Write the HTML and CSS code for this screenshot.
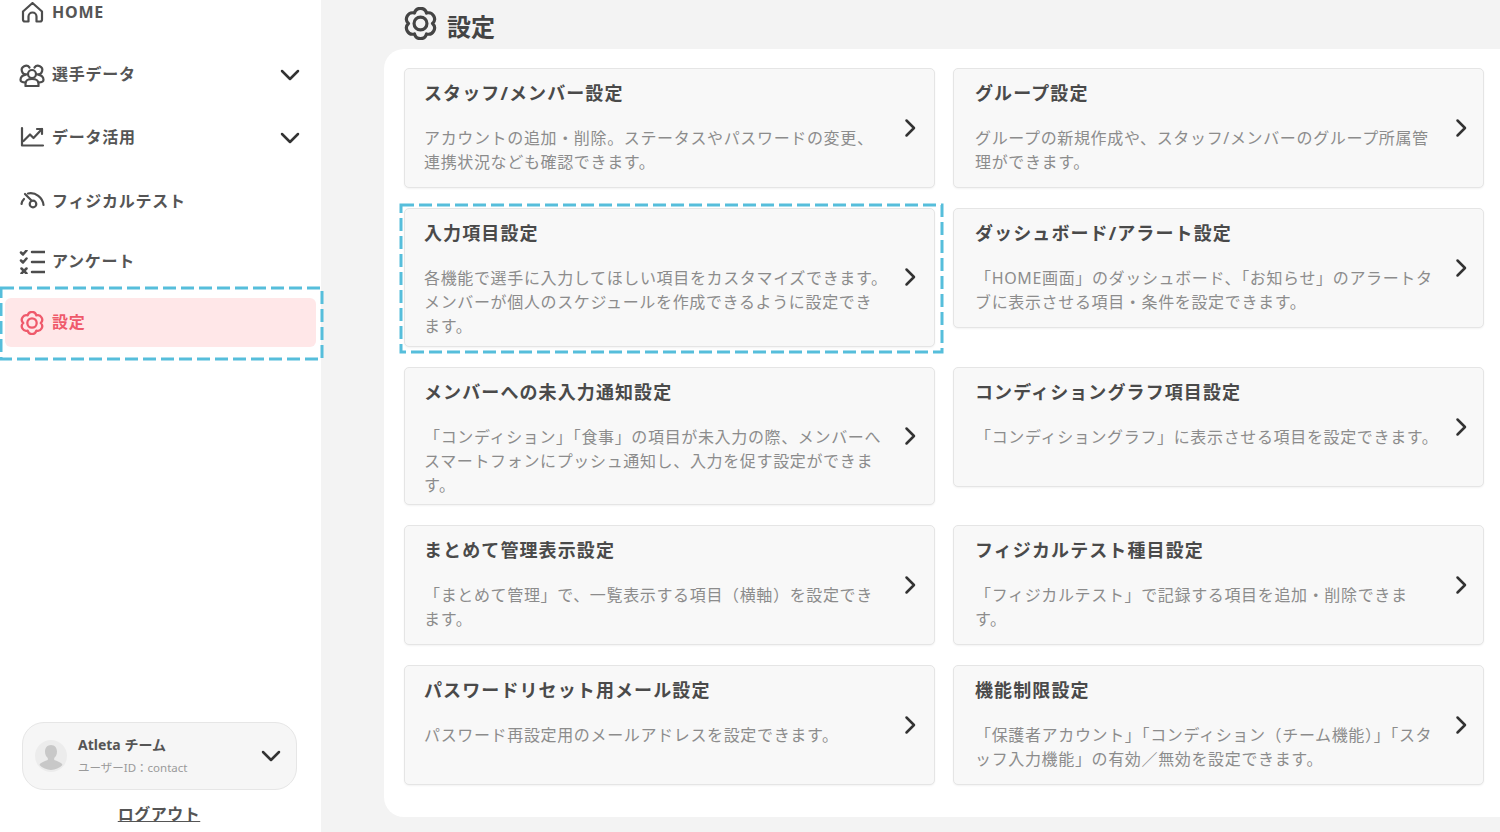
FILE: index.html
```html
<!DOCTYPE html>
<html lang="ja">
<head>
<meta charset="utf-8">
<title>設定</title>
<link rel="stylesheet" href="styles.css">
</head>
<body>

<svg class="icon-defs" width="0" height="0">
  <symbol id="gear" viewBox="1 1 22 22">
    <path d="M8 5.07A4.1 4.1 0 0 1 16 5.07A4.1 4.1 0 0 1 20 12A4.1 4.1 0 0 1 16 18.93A4.1 4.1 0 0 1 8 18.93A4.1 4.1 0 0 1 4 12A4.1 4.1 0 0 1 8 5.07Z"/>
    <circle cx="12" cy="12" r="4.3"/>
  </symbol>
  <symbol id="chevron-down" viewBox="0 0 20 12">
    <path d="M2 2l8 8 8-8"/>
  </symbol>
  <symbol id="chevron-right" viewBox="0 0 12 20">
    <path d="M2.5 2.5l7.5 7.5-7.5 7.5"/>
  </symbol>
</svg>

<div class="page">
  <aside class="sidebar">
    <nav class="nav">
      <a class="nav-item">
        <svg class="nav-icon" viewBox="0 0 26 24"><path d="M4 9.500L13.500 1l9.500 8.500V17.500a2 2 0 0 1-2 2h-3.500v-5a4 4 0 0 0-8 0v5H6a2 2 0 0 1-2-2z"/></svg>
        <span class="nav-label">HOME</span>
      </a>
      <a class="nav-item">
        <svg class="nav-icon" viewBox="0 0 26 24"><circle cx="13" cy="11" r="4"/><path d="M6.500 23v-2.500c0-3 2.800-4.500 6.500-4.500s6.500 1.500 6.500 4.500V23z"/><path d="M10.500 4.500a4.300 4.300 0 1 0-3 6.800C4 12 1.500 14 1.500 16.800c0 1.700 1.300 2.700 5 2.700"/><path d="M15.500 4.500a4.300 4.300 0 1 1 3 6.800C22 12 24.500 14 24.500 16.800c0 1.700-1.300 2.700-5 2.700"/></svg>
        <span class="nav-label">選手データ</span>
        <svg class="chevron"><use href="#chevron-down"/></svg>
      </a>
      <a class="nav-item">
        <svg class="nav-icon" viewBox="0 0 26 24"><path d="M3 2v17.500h21"/><path d="M4.500 15l6.500-6.500 3.500 3.500L23 3"/><path d="M18 3h5v5"/></svg>
        <span class="nav-label">データ活用</span>
        <svg class="chevron"><use href="#chevron-down"/></svg>
      </a>
      <a class="nav-item">
        <svg class="nav-icon" viewBox="0 0 26 24"><path d="M9 3.500A13 13 0 0 1 24.500 15"/><path d="M2.500 14A9 9 0 0 1 5 9"/><path d="M6 4l6 6"/><circle cx="14" cy="14" r="3.300"/></svg>
        <span class="nav-label">フィジカルテスト</span>
      </a>
      <a class="nav-item">
        <svg class="nav-icon nav-icon-list" viewBox="0 0 26 24"><path d="M13 2h12.500M13 12h12.500M13 22h12.500"/><path d="M2 2.500l2 2 3.500-4M2 10.500l2 2 3.500-4M2.500 18.500l5 5M7.500 18.500l-5 5"/></svg>
        <span class="nav-label">アンケート</span>
      </a>
      <a class="nav-item nav-item-active">
        <svg class="nav-icon gear-small"><use href="#gear"/></svg>
        <span class="nav-label">設定</span>
        <svg class="dash-frame dash-frame-nav"><rect width="100%" height="100%"/></svg>
      </a>
    </nav>

    <div class="user-box">
      <svg class="avatar" viewBox="0 0 32 32">
        <circle class="avatar-bg" cx="16" cy="16" r="16"/>
        <path class="avatar-fg" d="M16 5c-3.600 0-6 2.800-6 6.500 0 2.700 1 5 2.800 6.500v2c-3.200 1.200-7.300 2.300-8.300 5a16 16 0 0 0 23 0c-1-2.700-5.100-3.800-8.300-5v-2c1.800-1.500 2.800-3.800 2.800-6.500C22 7.800 19.600 5 16 5z"/>
      </svg>
      <div class="user-text">
        <div class="user-name">Atleta チーム</div>
        <div class="user-id">ユーザーID：contact</div>
      </div>
      <svg class="chevron chevron-user"><use href="#chevron-down"/></svg>
    </div>
    <a class="logout">ログアウト</a>
  </aside>

  <main class="main">
    <h1 class="page-title">
      <svg class="gear-large"><use href="#gear"/></svg>
      <span>設定</span>
    </h1>
    <section class="panel">
      <div class="card-grid">
        <a class="card">
          <div class="card-body">
            <h2 class="card-title">スタッフ/メンバー設定</h2>
            <p class="card-desc">アカウントの追加・削除。ステータスやパスワードの変更、<br>連携状況なども確認できます。</p>
          </div>
          <svg class="arrow"><use href="#chevron-right"/></svg>
        </a>
        <a class="card">
          <div class="card-body">
            <h2 class="card-title">グループ設定</h2>
            <p class="card-desc">グループの新規作成や、スタッフ/メンバーのグループ所属管<br>理ができます。</p>
          </div>
          <svg class="arrow"><use href="#chevron-right"/></svg>
        </a>
        <a class="card card-marked">
          <div class="card-body">
            <h2 class="card-title">入力項目設定</h2>
            <p class="card-desc">各機能で選手に入力してほしい項目をカスタマイズできます。<br>メンバーが個人のスケジュールを作成できるように設定でき<br>ます。</p>
          </div>
          <svg class="arrow"><use href="#chevron-right"/></svg>
          <svg class="dash-frame dash-frame-card"><rect width="100%" height="100%"/></svg>
        </a>
        <a class="card">
          <div class="card-body">
            <h2 class="card-title">ダッシュボード/アラート設定</h2>
            <p class="card-desc">「HOME画面」のダッシュボード、「お知らせ」のアラートタ<br>ブに表示させる項目・条件を設定できます。</p>
          </div>
          <svg class="arrow"><use href="#chevron-right"/></svg>
        </a>
        <a class="card">
          <div class="card-body">
            <h2 class="card-title">メンバーへの未入力通知設定</h2>
            <p class="card-desc">「コンディション」「食事」の項目が未入力の際、メンバーへ<br>スマートフォンにプッシュ通知し、入力を促す設定ができま<br>す。</p>
          </div>
          <svg class="arrow"><use href="#chevron-right"/></svg>
        </a>
        <a class="card">
          <div class="card-body">
            <h2 class="card-title">コンディショングラフ項目設定</h2>
            <p class="card-desc">「コンディショングラフ」に表示させる項目を設定できます。</p>
          </div>
          <svg class="arrow"><use href="#chevron-right"/></svg>
        </a>
        <a class="card">
          <div class="card-body">
            <h2 class="card-title">まとめて管理表示設定</h2>
            <p class="card-desc">「まとめて管理」で、一覧表示する項目（横軸）を設定でき<br>ます。</p>
          </div>
          <svg class="arrow"><use href="#chevron-right"/></svg>
        </a>
        <a class="card">
          <div class="card-body">
            <h2 class="card-title">フィジカルテスト種目設定</h2>
            <p class="card-desc">「フィジカルテスト」で記録する項目を追加・削除できま<br>す。</p>
          </div>
          <svg class="arrow"><use href="#chevron-right"/></svg>
        </a>
        <a class="card">
          <div class="card-body">
            <h2 class="card-title">パスワードリセット用メール設定</h2>
            <p class="card-desc">パスワード再設定用のメールアドレスを設定できます。</p>
          </div>
          <svg class="arrow"><use href="#chevron-right"/></svg>
        </a>
        <a class="card">
          <div class="card-body">
            <h2 class="card-title">機能制限設定</h2>
            <p class="card-desc">「保護者アカウント」「コンディション（チーム機能）」「スタ<br>ッフ入力機能」の有効／無効を設定できます。</p>
          </div>
          <svg class="arrow"><use href="#chevron-right"/></svg>
        </a>
      </div>
    </section>
  </main>
</div>

</body>
</html>
```

FILE: styles.css
```css
* {
  box-sizing: border-box;
}

html, body {
  margin: 0;
  height: 100%;
  overflow: hidden;
}

body {
  font-family: "Noto Sans", "Noto Sans CJK JP", sans-serif;
  color: #4a4a4a;
  background-color: #f3f3f3;
}

.icon-defs {
  position: absolute;
}

.page {
  display: flex;
  height: 832px;
}

/* sidebar */
.sidebar {
  display: flex;
  flex-direction: column;
  width: 321px;
  background-color: #ffffff;
  padding-bottom: 6px;
}

.nav {
  display: grid;
  grid-template-rows: 61px 63px 64px 60px 61px 49px;
  margin-top: -11px;
  padding: 0 5px;
}

.nav-item {
  position: relative;
  display: flex;
  align-items: center;
  height: 49px;
  padding: 0 16px 0 14px;
  border-radius: 6px;
  color: #555555;
}

.nav-icon {
  flex: none;
  width: 26px;
  height: 24px;
  fill: none;
  stroke: #4d4d4d;
  stroke-width: 2.2;
  stroke-linecap: round;
  stroke-linejoin: round;
}

.nav-icon-list {
  stroke-width: 2.5;
}

.nav-label {
  flex: 1;
  margin: 0 0 3px 7px;
  font-size: 16px;
  font-weight: 700;
  letter-spacing: 0.75px;
}

.nav-item-active {
  background-color: #ffe7e8;
  color: #ef5a6b;
}

.nav-item-active .nav-icon {
  stroke: #ef5a6b;
}

.chevron {
  flex: none;
  width: 20px;
  height: 12px;
  fill: none;
  stroke: #333333;
  stroke-width: 2.5;
  stroke-linecap: round;
  stroke-linejoin: round;
}

/* dashed highlight laid over a menu item or card */
.dash-frame {
  position: absolute;
  overflow: visible;
  fill: none;
  stroke: #56bedb;
  stroke-width: 3;
  stroke-dasharray: 13 5;
  pointer-events: none;
}

.dash-frame-nav {
  left: -4px;
  top: -10px;
  width: 321px;
  height: 71px;
}

.dash-frame-card {
  left: -4px;
  top: -4px;
  width: 541px;
  height: 147px;
}

.user-box {
  display: flex;
  align-items: center;
  width: 275px;
  height: 68px;
  margin: auto 0 0 22px;
  padding: 0 15px 0 12px;
  background-color: #f6f6f6;
  border: 1px solid #e6e6e6;
  border-radius: 22px;
}

.avatar {
  flex: none;
  width: 32px;
  height: 32px;
}

.avatar-bg {
  fill: #ececec;
}

.avatar-fg {
  fill: #c8c8c8;
}

.user-text {
  flex: 1;
  margin-left: 11px;
}

.user-name {
  font-size: 14px;
  font-weight: 700;
  line-height: 20px;
  color: #555555;
}

.user-id {
  margin-top: 4px;
  font-size: 11.5px;
  line-height: 18px;
  color: #9a9a9a;
}

.logout {
  margin-top: 12px;
  width: 318px;
  text-align: center;
  font-size: 16px;
  font-weight: 700;
  line-height: 24px;
  letter-spacing: 0.5px;
  color: #555555;
  text-decoration: underline;
}

/* main area */
.main {
  display: flex;
  flex: 1;
  flex-direction: column;
  min-width: 0;
  padding: 0 0 15px 63px;
}

.page-title {
  display: flex;
  align-items: center;
  flex: none;
  height: 49px;
  margin: 0;
  padding: 0 0 3px 20px;
  font-size: 24px;
  font-weight: 700;
  color: #444444;
}

.page-title span {
  margin-left: 10px;
  margin-top: 5px;
}

.gear-large {
  width: 33px;
  height: 33px;
  fill: none;
  stroke: #444444;
  stroke-width: 2.1;
  stroke-linejoin: round;
}

.gear-small {
  fill: none;
  stroke-width: 2.100;
}

.panel {
  flex: 1;
  background-color: #ffffff;
  border-radius: 20px 0 0 20px;
  padding: 19px 16px 0 20px;
}

.card-grid {
  display: grid;
  grid-template-columns: 531px 531px;
  column-gap: 18px;
  row-gap: 20px;
  align-items: start;
}

.card {
  position: relative;
  display: flex;
  min-height: 120px;
  padding: 12px 18px 7px 19px;
  background-color: #f8f8f8;
  border: 1px solid #e5e5e5;
  border-radius: 5px;
  box-shadow: 0 1px 2px rgba(0, 0, 0, 0.05);
}

.card:nth-child(even) {
  padding-left: 21px;
}

.card-marked {
  padding-bottom: 8px;
}

.card-body {
  flex: none;
  width: 465px;
}

.card-title {
  margin: 0 0 21px;
  font-size: 18px;
  font-weight: 700;
  line-height: 24px;
  letter-spacing: 1.1px;
  color: #4a4a4a;
}

.card-desc {
  margin: 0;
  font-size: 16px;
  line-height: 24px;
  letter-spacing: 0.65px;
  color: #8c8c8c;
  white-space: nowrap;
}

.arrow {
  flex: none;
  align-self: center;
  width: 12px;
  height: 20px;
  margin: -6px 0 0 15px;
  fill: none;
  stroke: #333333;
  stroke-width: 2.5;
  stroke-linecap: round;
  stroke-linejoin: round;
}
```
